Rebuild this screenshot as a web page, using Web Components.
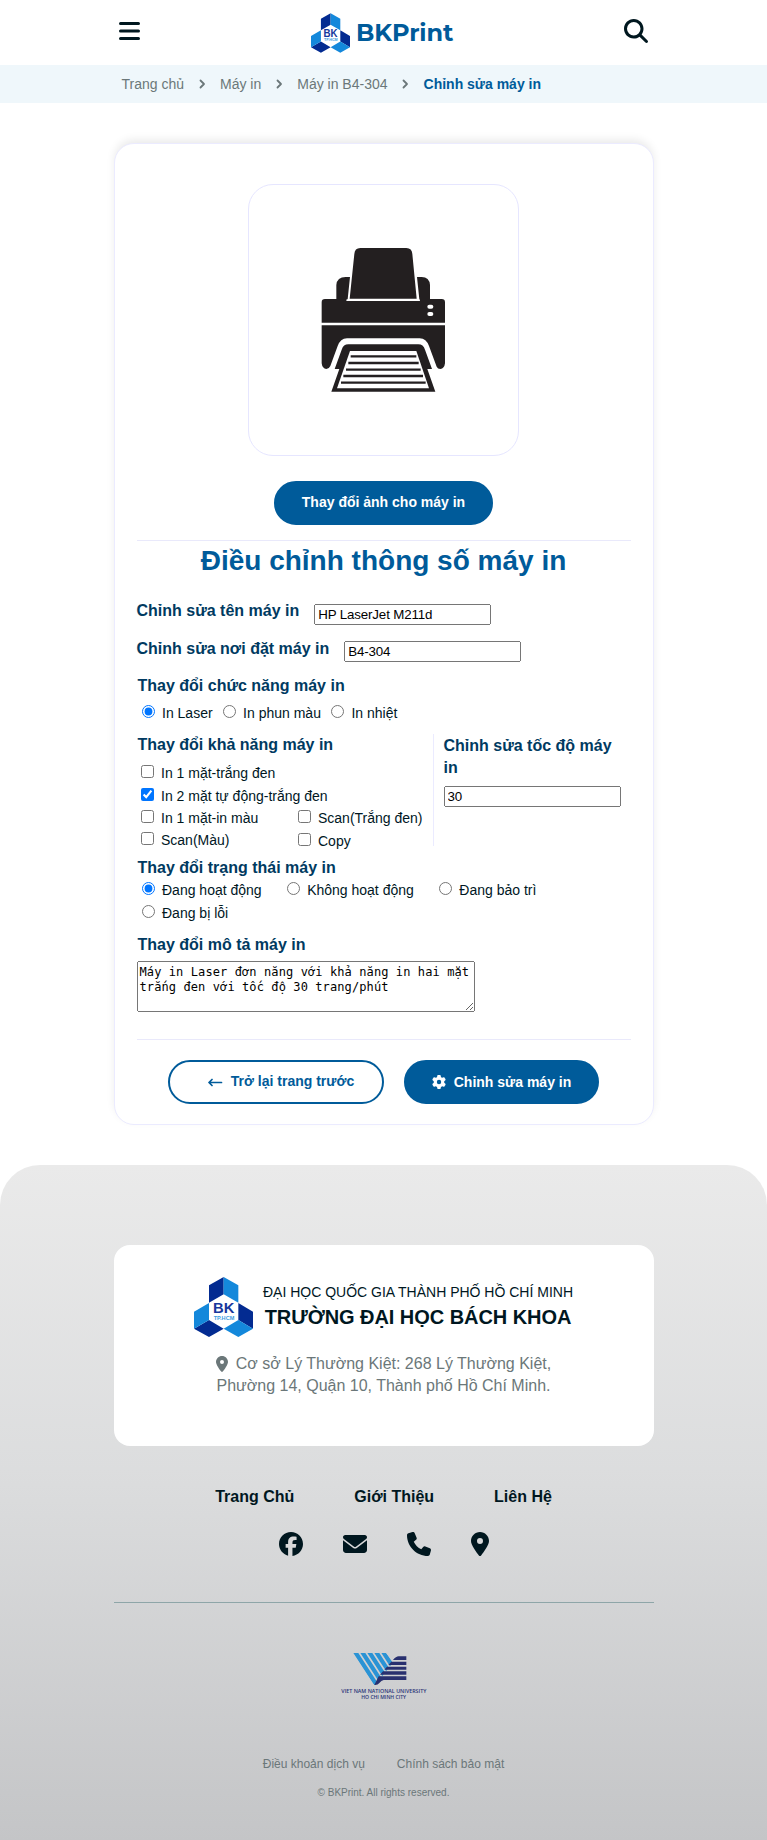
<!DOCTYPE html>
<html lang="vi">
<head>
<meta charset="utf-8">
<title>BKPrint</title>
<style>
body{margin:0;background:#fff;color:#00171f;font-family:"Liberation Sans",Arial,sans-serif;font-size:14px}
</style>
</head>
<body>
<bk-page></bk-page>
<script>
const def=(name,html,setup)=>customElements.define(name,class extends HTMLElement{
  constructor(){
    super();
    const t=document.createElement('template');
    t.innerHTML='<style>*{box-sizing:border-box}svg{display:block}:host{display:block}</style>'+html;
    this.attachShadow({mode:'open'}).appendChild(t.content.cloneNode(true));
  }
  connectedCallback(){ if(setup) setup(this,this.shadowRoot); }
});

const ICONS={
  bars:['0 0 21 18','<path d="M1.500 1.500h18M1.500 9h18M1.500 16.500h18" fill="none" stroke="currentColor" stroke-width="3" stroke-linecap="round"/>'],
  search:['0 0 512 512','<path d="M416 208c0 45.900-14.900 88.300-40 122.700L502.600 457.400c12.500 12.500 12.500 32.800 0 45.300s-32.800 12.500-45.300 0L330.700 376c-34.400 25.200-76.800 40-122.700 40C93.100 416 0 322.900 0 208S93.100 0 208 0S416 93.100 416 208zM208 352a144 144 0 1 0 0-288 144 144 0 1 0 0 288z"/>'],
  chevron:['0 0 7 10','<path d="M1.500 1.500L5 5L1.500 8.500" fill="none" stroke="currentColor" stroke-width="1.800" stroke-linecap="round" stroke-linejoin="round"/>'],
  arrow:['0 0 15 9','<path d="M13.500 4.500H1.300M4 1.500L1 4.500L4 7.500" fill="none" stroke="currentColor" stroke-width="1.700" stroke-linecap="round" stroke-linejoin="round"/>'],
  pin:['0 0 384 512','<path d="M215.700 499.200C267 435 384 279.400 384 192C384 86 298 0 192 0S0 86 0 192c0 87.400 117 243 168.300 307.200c12.300 15.300 35.100 15.300 47.400 0zM192 128a64 64 0 1 1 0 128 64 64 0 1 1 0-128z"/>'],
  mail:['0 0 512 512','<path d="M48 64C21.500 64 0 85.500 0 112c0 15.100 7.100 29.300 19.200 38.400L236.800 313.600c11.400 8.500 27 8.500 38.400 0L492.800 150.400c12.100-9.100 19.200-23.300 19.200-38.400c0-26.500-21.500-48-48-48H48zM0 176V384c0 35.300 28.700 64 64 64H448c35.300 0 64-28.700 64-64V176L294.400 339.200c-22.800 17.100-54 17.100-76.800 0L0 176z"/>'],
  phone:['0 0 512 512','<path d="M164.900 24.600c-7.700-18.600-28-28.500-47.400-23.200l-88 24C12.100 30.200 0 46 0 64C0 311.400 200.600 512 448 512c18 0 33.800-12.100 38.600-29.500l24-88c5.300-19.400-4.600-39.700-23.200-47.400l-96-40c-16.300-6.800-35.200-2.100-46.300 11.600L304.700 368C234.300 334.700 177.300 277.700 144 207.300L193.300 167c13.700-11.200 18.400-30 11.600-46.300l-40-96z"/>'],
  facebook:['0 0 512 512','<path d="M512 256C512 114.600 397.400 0 256 0S0 114.600 0 256C0 376 82.700 476.800 194.200 504.500V334.200H141.400V256h52.800V222.300c0-87.100 39.400-127.500 125-127.500c16.200 0 44.200 3.200 55.700 6.400V172c-6-.6-16.500-1-29.600-1c-42 0-58.200 15.900-58.200 57.200V256h83.600l-14.400 78.200H287V510.100C413.800 494.800 512 386.900 512 256h0z"/>'],
  gear:['0 0 512 512','<path d="M495.900 166.600c3.200 8.700 .5 18.400-6.400 24.600l-43.300 39.400c1.100 8.300 1.700 16.800 1.700 25.400s-.6 17.100-1.700 25.400l43.300 39.400c6.900 6.200 9.600 15.900 6.400 24.600c-4.400 11.900-9.700 23.300-15.800 34.300l-4.700 8.100c-6.600 11-14 21.400-22.100 31.200c-5.900 7.200-15.700 9.600-24.500 6.800l-55.700-17.700c-13.400 10.300-28.200 18.900-44 25.400l-12.500 57.100c-2 9.100-9 16.300-18.200 17.800c-13.800 2.300-28 3.500-42.500 3.500s-28.700-1.200-42.500-3.500c-9.200-1.500-16.200-8.700-18.200-17.800l-12.500-57.100c-15.800-6.500-30.600-15.100-44-25.400L83.100 425.900c-8.800 2.800-18.600 .3-24.500-6.800c-8.100-9.800-15.500-20.200-22.100-31.200l-4.700-8.100c-6.100-11-11.400-22.400-15.800-34.300c-3.200-8.700-.5-18.400 6.400-24.600l43.300-39.400C64.600 273.100 64 264.600 64 256s.6-17.100 1.700-25.400L22.400 191.200c-6.900-6.200-9.600-15.900-6.400-24.600c4.400-11.900 9.700-23.300 15.800-34.300l4.700-8.100c6.600-11 14-21.400 22.100-31.200c5.900-7.200 15.700-9.600 24.500-6.800l55.700 17.700c13.400-10.300 28.200-18.900 44-25.400l12.500-57.100c2-9.100 9-16.300 18.200-17.800C227.300 1.200 241.500 0 256 0s28.700 1.200 42.500 3.500c9.200 1.500 16.200 8.700 18.200 17.800l12.500 57.100c15.800 6.500 30.600 15.100 44 25.400l55.700-17.700c8.800-2.800 18.600-.3 24.500 6.800c8.100 9.800 15.500 20.200 22.100 31.200l4.700 8.100c6.100 11 11.400 22.400 15.800 34.300zM256 336a80 80 0 1 0 0-160 80 80 0 1 0 0 160z"/>']
};
def('bk-icon','<style>:host{flex:none}</style><div></div>',(h,r)=>{
  const [vb,p]=ICONS[h.getAttribute('name')];
  r.querySelector('div').innerHTML=`<svg viewBox="${vb}" width="${h.getAttribute('w')}" height="${h.getAttribute('h')}" fill="currentColor">${p}</svg>`;
});

def('bk-logo',`<style>:host{flex:none}svg{width:100%;height:100%}text{font-family:"Liberation Sans",Arial,sans-serif;font-weight:700}</style>
<svg viewBox="42 51 177 180">
<path fill="#032b91" d="M87 76L131 51V103L87 128ZM42 206L87 180L131 206L87 231ZM175 129L219 155V206L175 180Z"/>
<path fill="#1488db" d="M131 51L175 76V128L131 103ZM42 155L87 129V180L42 206ZM131 206L175 180L219 206L175 231Z"/>
<text x="99" y="160" font-size="46" textLength="64" lengthAdjust="spacingAndGlyphs" fill="#16379c">BK</text>
<text x="101" y="179" font-size="18" textLength="62" lengthAdjust="spacingAndGlyphs" fill="#3a9be0">TP.HCM</text>
</svg>`);

def('bk-header',`<style>
:host{height:65px;background:#fff}
.in{width:540px;height:65px;margin:0 auto;display:grid;grid-template-columns:1fr auto 1fr;align-items:center}
.l{padding-left:5px;margin-top:-3px}.r{justify-self:end;padding-right:6px;margin-top:-3px}
.b{display:flex;align-items:center;gap:6px;margin-right:3px}
bk-logo{width:39px;height:40px;margin-top:1px}
.n{font:700 24px/30px Montserrat,Inter,sans-serif;letter-spacing:-.1px;color:#005b9a;width:97px;white-space:nowrap}
</style><div class="in"><bk-icon class="l" name="bars" w="21" h="18"></bk-icon>
<div class="b"><bk-logo></bk-logo><span class="n">BKPrint</span></div>
<bk-icon class="r" name="search" w="24" h="24"></bk-icon></div>`);

def('bk-breadcrumb',`<style>
:host{height:38px;background:#eff7fb}
.in{width:540px;height:38px;margin:0 auto;padding-left:8px;display:flex;align-items:center;gap:14.500px;color:#6b7779;line-height:20px}
b{color:#005b9a}
</style><div class="in"><span>Trang chủ</span><bk-icon name="chevron" w="7" h="10"></bk-icon><span>Máy in</span><bk-icon name="chevron" w="7" h="10"></bk-icon><span>Máy in B4-304</span><bk-icon name="chevron" w="7" h="10"></bk-icon><b>Chỉnh sửa máy in</b></div>`);

def('bk-card',`<style>
:host{box-sizing:border-box;width:540px;height:982px;margin:40px auto 0;padding:40px 22px 0;border:1px solid #ebebff;border-radius:20px;background:#fff;box-shadow:0 -4px 10px -1px rgba(0,0,0,.09)}
</style><slot></slot>`);

def('bk-photo',`<style>
:host{box-sizing:border-box;width:271px;height:272px;margin:0 auto;border:1px solid #e6e6ff;border-radius:25px}
</style><svg viewBox="28 45 807 810" width="269" height="270">
<g fill="#231f20">
<path d="M290 388V345Q292 321 318 321H331L324 388ZM571 388V345Q569 321 546 321H532L539 388Z"/>
<path d="M344 252Q345 234 362 234H500Q517 234 518 252L531 386H330Z"/>
<path d="M246 458V397Q246 387 256 387H321L320 393H541L540 387H606Q616 387 616 397V458Z"/>
<path d="M246 466H616V580Q614 596 602 597Q594 597 591 590L568 528Q560 506 540 505H322Q302 506 294 528L272 588Q268 597 260 597Q248 596 246 580Z"/>
<path d="M285 597L306 539Q311 523 326 523H536Q551 523 556 539L577 597H563L587 665H275L299 597Z"/>
</g>
<path fill="#fff" d="M331 543H530L568 655H292Z"/>
<path stroke="#231f20" stroke-width="7" d="M333 559H530M326 579H537M319 599H543M311 618H550M304 638H558"/>
<rect x="563" y="404" width="18" height="12" rx="6" fill="#fff"/><rect x="563" y="426" width="18" height="12" rx="6" fill="#fff"/>
</svg>`);

def('bk-button',`<style>
:host{display:flex;box-sizing:border-box;height:44px;border-radius:22px;background:#005b9a;border:2px solid #005b9a;color:#fff;font:700 14px/20px "Liberation Sans",Arial,sans-serif;align-items:center;justify-content:center;gap:8px;white-space:nowrap}
:host([outline]){background:#fff;color:#005b9a}
</style><slot></slot>`);

def('bk-field',`<style>
:host{display:flex;align-items:flex-start;font-size:16px;line-height:22px;font-weight:700;color:#003a61}
input{font:13.333px "Liberation Sans",Arial,sans-serif;width:177px;height:21px;margin:0;flex:none;letter-spacing:-.15px}
</style><span><slot></slot></span><input type="text">`,(h,r)=>{
  const i=r.querySelector('input');i.value=h.getAttribute('value');i.style.margin=h.getAttribute('offset');
});

def('bk-option',`<style>
:host{height:22px}
label{display:flex;align-items:flex-start;gap:7.500px;line-height:22px;white-space:nowrap}
input{width:13px;height:13px;margin:3px 0 0;flex:none}
</style><label><input><span><slot></slot></span></label>`,(h,r)=>{
  const i=r.querySelector('input');i.type=h.getAttribute('type');i.checked=h.hasAttribute('on');
});

def('bk-form',`<style>
h1{margin:3px 0 0;font-size:28px;line-height:34px;text-align:center;color:#005b9a}
h2{margin:0 0 0 1px;font-size:16px;line-height:22px;color:#003a61}
hr{margin:0;border:0;height:1px;background:#e9e9fb}
.row{display:flex}
.split{display:grid;grid-template-columns:296px 1px 1fr;margin-top:10px;height:112px}
.split i{background:#ebebff;height:112px}
.two{display:grid;grid-template-columns:157px 1fr;margin-left:4px}
.side{padding:1px 0 0 10px}
.side bk-field{display:block;width:177px}
textarea{display:block;width:338px;height:51px;margin:5px 0 0;padding:3px 2px 2px;font:12px/15px "DejaVu Sans Mono",monospace;letter-spacing:.1px;color:#000}
.act{display:flex;justify-content:center;gap:20px;margin-top:20px}
</style>
<bk-photo></bk-photo>
<bk-button style="width:219px;margin:25px auto 0"><span style="margin-top:-2px">Thay đổi ảnh cho máy in</span></bk-button>
<hr style="margin-top:15px">
<h1>Điều chỉnh thông số máy in</h1>
<bk-field style="margin-top:22px;height:38px" offset="4px 0 0 15px" value="HP LaserJet M211d">Chỉnh sửa tên máy in</bk-field>
<bk-field style="height:37px" offset="3px 0 0 15px" value="B4-304">Chỉnh sửa nơi đặt máy in</bk-field>
<h2>Thay đổi chức năng máy in</h2>
<div class="row" style="gap:10px;margin:5px 0 0 5px"><bk-option type="radio" on>In Laser</bk-option><bk-option type="radio">In phun màu</bk-option><bk-option type="radio">In nhiệt</bk-option></div>
<div class="split"><div><h2>Thay đổi khả năng máy in</h2>
<bk-option style="margin:6px 0 0 4px" type="checkbox">In 1 mặt-trắng đen</bk-option>
<bk-option style="margin:1px 0 0 4px" type="checkbox" on>In 2 mặt tự động-trắng đen</bk-option>
<div class="two"><bk-option type="checkbox">In 1 mặt-in màu</bk-option><bk-option type="checkbox">Scan(Trắng đen)</bk-option><bk-option type="checkbox">Scan(Màu)</bk-option><bk-option style="padding-top:1px" type="checkbox">Copy</bk-option></div>
</div><i></i><div class="side"><bk-field value="30" offset="7px 0 0 0">Chỉnh sửa tốc độ máy in</bk-field></div></div>
<h2 style="margin-top:11px">Thay đổi trạng thái máy in</h2>
<div class="row" style="gap:25px;margin-left:5px"><bk-option type="radio" on>Đang hoạt động</bk-option><bk-option type="radio">Không hoạt động</bk-option><bk-option type="radio">Đang bảo trì</bk-option></div>
<bk-option style="margin:1px 0 0 5px" type="radio">Đang bị lỗi</bk-option>
<h2 style="margin-top:10px">Thay đổi mô tả máy in</h2>
<textarea>Máy in Laser đơn năng với khả năng in hai mặt trắng đen với tốc độ 30 trang/phút</textarea>
<hr style="margin-top:27px">
<div class="act"><bk-button outline style="width:216px;padding-left:10px"><bk-icon name="arrow" w="15" h="9"></bk-icon><span style="margin-top:-2px">Trở lại trang trước</span></bk-button>
<bk-button style="width:195px"><bk-icon name="gear" w="14" h="14"></bk-icon>Chỉnh sửa máy in</bk-button></div>`);

def('vnu-logo',`<style>:host{width:86px;height:49px;margin:0 auto}text{font-family:"Open Sans","Noto Sans",sans-serif;font-weight:600;fill:#2b3478}</style>
<svg viewBox="305 66 258 147" width="86" height="49">
<defs><clipPath id="v"><path d="M340 69H440L462 96L407 166L400 160Z"/></clipPath></defs>
<g clip-path="url(#v)" stroke="#2a93d5" stroke-width="12.500" fill="none"><path d="M345 62L415 170M366 62L436 170M387 62L457 170M408 62L478 170M429 62L499 170"/></g>
<path fill="#29306f" d="M501 79V90H461Q470 79 478 79ZM501 95V105H447L456 95ZM501 110V119H435L443 110ZM501 124V134H422L431 124ZM501 139V150H433Q426 151 420 159Q415 166 405 165L418 139Z"/>
<text x="306" y="189" font-size="15" textLength="255" lengthAdjust="spacingAndGlyphs">VIET NAM NATIONAL UNIVERSITY</text>
<text x="366" y="208" font-size="15" textLength="134" lengthAdjust="spacingAndGlyphs">HO CHI MINH CITY</text>
</svg>`);

def('bk-footer',`<style>
:host{box-sizing:border-box;height:675px;margin-top:40px;padding-top:80px;border-radius:40px 40px 0 0;background:linear-gradient(#eaeaea,#dcddde 45%,#c4c5c7)}
.card{width:540px;height:201px;margin:0 auto;padding-top:32px;border-radius:16px;background:#fff}
.uni{display:flex;justify-content:center;gap:10px;height:60px}
bk-logo{width:59px;height:60px}
.t{text-align:center;line-height:22px;padding-top:4px;white-space:nowrap}
.t b{display:block;font-size:20px;line-height:28px;letter-spacing:-.06px}
.addr{width:336px;margin:16px auto 0;text-align:center;font-size:16px;line-height:22px;color:#6b7779}
.addr div{display:flex;justify-content:center;align-items:center;gap:8px;white-space:nowrap}
nav{display:flex;justify-content:center}
.links{gap:60px;font-size:16px;line-height:22px;font-weight:700;margin-top:40px}
.ic{gap:40px;margin:23px auto 0;height:25px;align-items:center}
.line{width:540px;height:1px;margin:46px auto 49px;background:#8ea6a8}
.legal{gap:32px;font-size:12px;line-height:16px;color:#6b7779;margin-top:55px}
p{margin:14px 0 0;text-align:center;font-size:10px;line-height:14px;color:#6b7779}
</style>
<div class="card"><div class="uni"><bk-logo></bk-logo><div class="t">ĐẠI HỌC QUỐC GIA THÀNH PHỐ HỒ CHÍ MINH<b>TRƯỜNG ĐẠI HỌC BÁCH KHOA</b></div></div>
<div class="addr"><div><bk-icon name="pin" w="12" h="16"></bk-icon><span>Cơ sở Lý Thường Kiệt: 268 Lý Thường Kiệt,</span></div>Phường 14, Quận 10, Thành phố Hồ Chí Minh.</div></div>
<nav class="links"><span>Trang Chủ</span><span>Giới Thiệu</span><span>Liên Hệ</span></nav>
<nav class="ic"><bk-icon name="facebook" w="24" h="24"></bk-icon><bk-icon name="mail" w="24" h="24"></bk-icon><bk-icon name="phone" w="24" h="24"></bk-icon><bk-icon name="pin" w="18" h="24"></bk-icon></nav>
<div class="line"></div>
<vnu-logo></vnu-logo>
<nav class="legal"><span>Điều khoản dịch vụ</span><span>Chính sách bảo mật</span></nav>
<p>© BKPrint. All rights reserved.</p>`);

def('bk-page','<bk-header></bk-header><bk-breadcrumb></bk-breadcrumb><bk-card><bk-form></bk-form></bk-card><bk-footer></bk-footer>');
</script>
</body>
</html>
